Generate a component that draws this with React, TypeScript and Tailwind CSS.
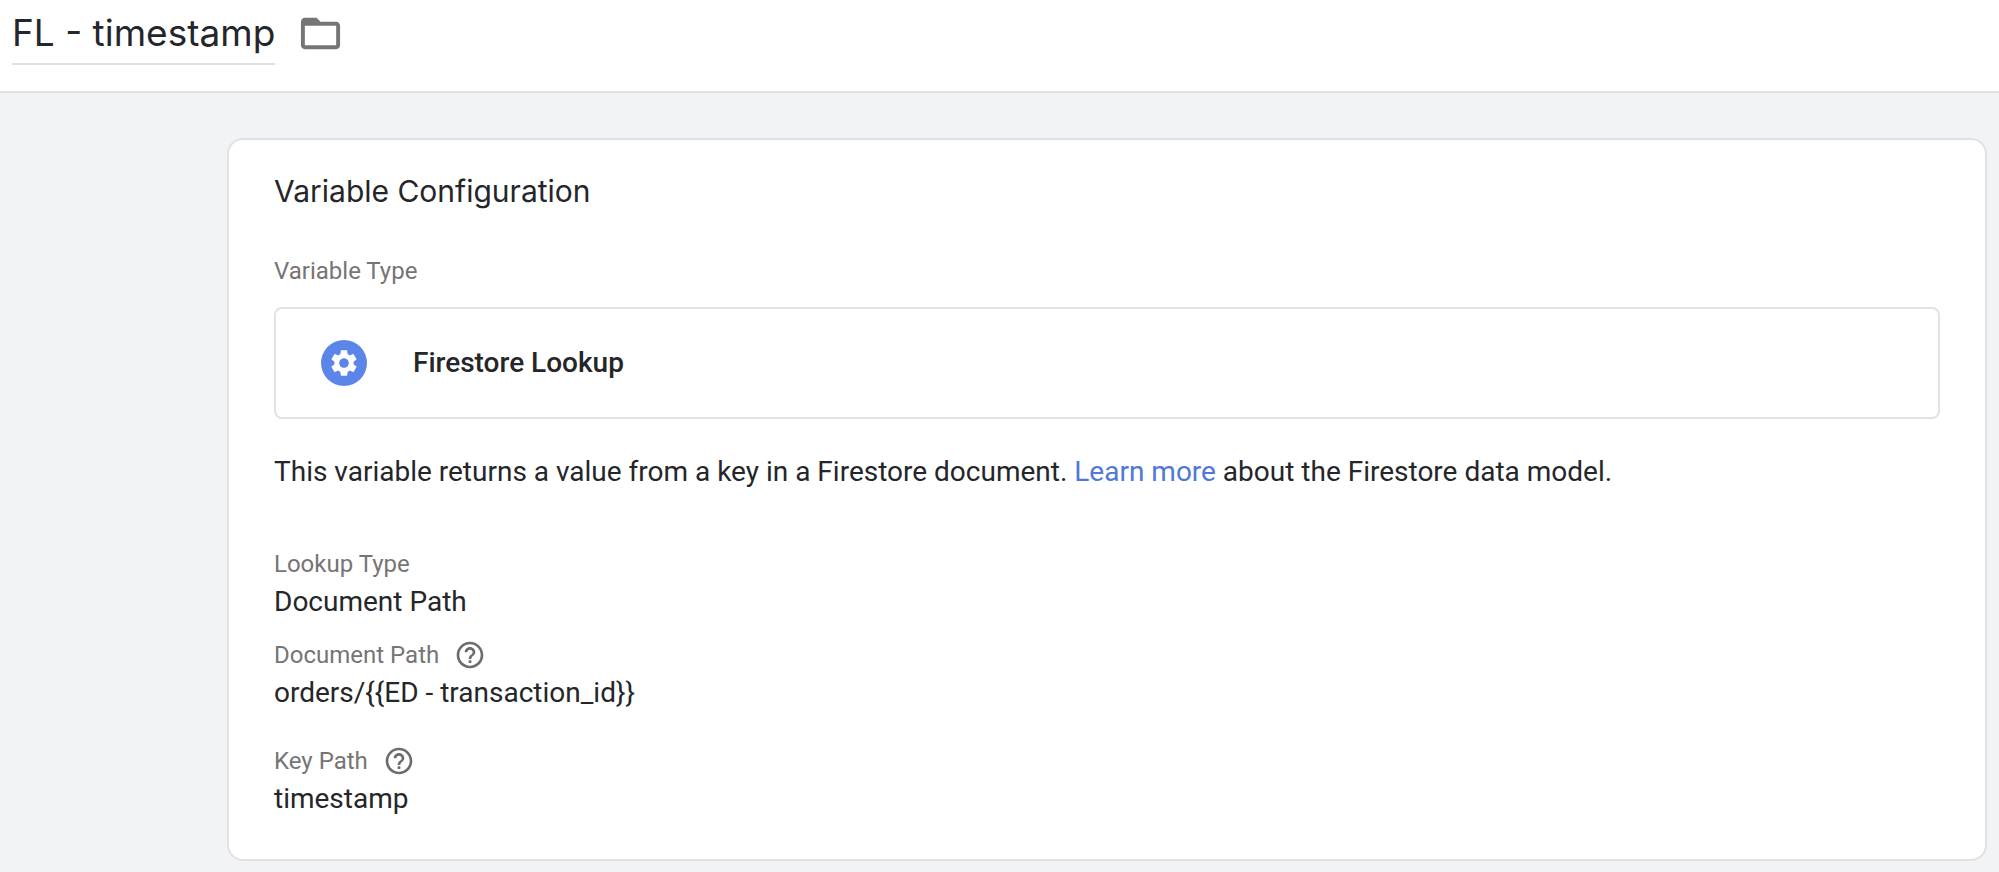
import { useState } from "react";
import type { ReactNode } from "react";
import { MdFolderOpen, MdHelpOutline, MdSettings } from "react-icons/md";

interface FieldProps {
  label: string;
  help?: boolean;
  children: ReactNode;
}

// Read-only field: grey label, optional help button, value below
function Field({ label, help = false, children }: FieldProps) {
  return (
    <div>
      <dt className="flex items-center gap-[15px] text-2xl/8 text-[#757575]">
        {label}
        {help && (
          <button type="button" aria-label={`Help: ${label}`} className="text-[#6b6c6f]">
            <MdHelpOutline className="size-8" />
          </button>
        )}
      </dt>
      <dd className="text-[28px] leading-11">{children}</dd>
    </div>
  );
}

export default function App() {
  const [name, setName] = useState("FL - timestamp");

  return (
    <div className="flex min-h-screen flex-col bg-[#f1f3f4] font-[Roboto,sans-serif] text-[#242629]">
      <header className="flex items-start gap-[22px] border-b-2 border-[#e0e1e2] bg-white px-3 pt-1 pb-[26px]">
        <input
          type="text"
          aria-label="Variable name"
          value={name}
          onChange={(e) => setName(e.target.value)}
          className="h-[61px] field-sizing-content border-b-2 border-[#e0e0e0] pb-0.5 font-[Inter,sans-serif] text-[37px] outline-none"
        />
        <button type="button" aria-label="Move to folder" className="mt-1.5 text-[#757575]">
          <MdFolderOpen className="size-[47px]" />
        </button>
      </header>

      <main className="pt-[45px] pr-3 pb-3 pl-[227px]">
        <section className="rounded-2xl border-2 border-[#e0e1e3] bg-white px-[45px] pt-[31px] pb-[38px]">
          <h1 className="font-[Inter,sans-serif] text-[30px] leading-10">Variable Configuration</h1>

          <h2 className="mt-11 text-2xl/8 text-[#757575]">Variable Type</h2>
          <button
            type="button"
            className="mt-5 flex w-full items-center gap-[46px] rounded-lg border-2 border-[#e2e2e2] px-[45px] py-[31px] text-left"
          >
            <span className="flex size-[46px] items-center justify-center rounded-full bg-[#5c85e8] text-white">
              <MdSettings className="size-8" />
            </span>
            <span className="text-[28px] leading-11 font-medium">Firestore Lookup</span>
          </button>

          <p className="mt-[31px] text-[28px] leading-11">
            This variable returns a value from a key in a Firestore document.{" "}
            <a href="#learn-more" className="text-[#4f78d8]">Learn more</a> about the Firestore data model.
          </p>

          <dl className="mt-[54px]">
            <Field label="Lookup Type">Document Path</Field>
            <div className="mt-[15px] space-y-[30px]">
              <Field label="Document Path" help>{"orders/{{ED - transaction_id}}"}</Field>
              <Field label="Key Path" help>timestamp</Field>
            </div>
          </dl>
        </section>
      </main>
    </div>
  );
}
